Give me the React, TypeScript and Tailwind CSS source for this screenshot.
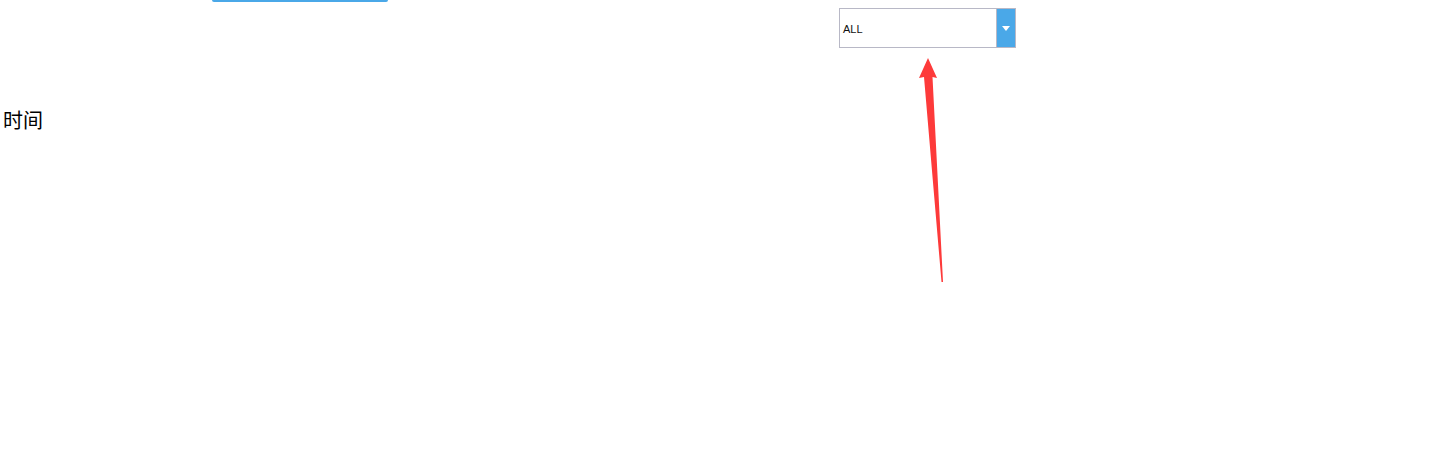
export default function App() {
  return (
    <div className="relative h-[457px] w-full overflow-hidden bg-white font-['Liberation_Sans','Noto_Sans_CJK_SC',sans-serif] text-black">
      {/* bottom edge of a button cut off by the top of the page */}
      <div className="ml-[212px] h-[2px] w-[176px] rounded-b-[3px] bg-[#4aa8e8]" />

      <div className="ml-[839px] mt-[6px] flex h-[40px] w-[177px] border border-[#b8b8c6] bg-white">
        <span className="flex flex-1 items-center pl-[3px] pt-[2px] text-[11px] leading-none text-[#111]">ALL</span>
        <button className="flex w-[19px] items-center justify-center border-l border-[#b8b8c6] bg-[#4aa8e8]">
          <svg width="8" height="5" viewBox="0 0 8 5">
            <path d="M0 0H8L4 5Z" fill="#fff" />
          </svg>
        </button>
      </div>

      <div className="mt-[60px] pl-[3px] font-['Noto_Sans_CJK_SC',sans-serif] text-[20px] leading-[24px]">时间</div>

      {/* annotation arrow */}
      <svg className="absolute left-0 top-0" width="1443" height="457" viewBox="0 0 1443 457">
        <polygon
          points="928,58 937,78 932.5,77 943,282 941.5,282 924,77 919,78"
          fill="#fd3a3a"
        />
      </svg>
    </div>
  );
}
